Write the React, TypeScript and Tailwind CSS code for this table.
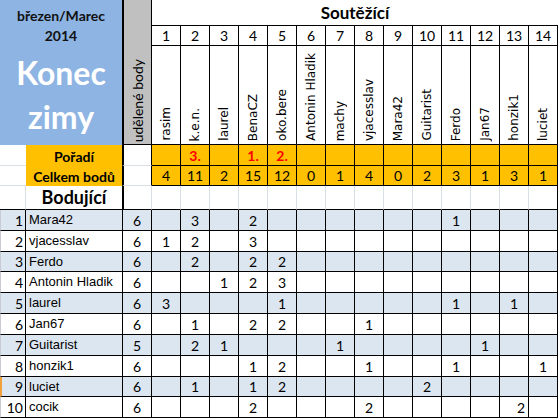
import React from 'react'

const players = ['rasim', 'k.e.n.', 'laurel', 'BenaCZ', 'oko.bere', 'Antonin Hladik', 'machy', 'vjacesslav', 'Mara42', 'Guitarist', 'Ferdo', 'Jan67', 'honzik1', 'luciet']
const totals = [4, 11, 2, 15, 12, 0, 1, 4, 0, 2, 3, 1, 3, 1]
const places: Record<number, string> = { 2: '3.', 4: '1.', 5: '2.' }

// body: which competitor (1-14) got how many points
const rows = [
  { name: 'Mara42', pts: 6, got: { 2: 3, 4: 2, 11: 1 } },
  { name: 'vjacesslav', pts: 6, got: { 1: 1, 2: 2, 4: 3 } },
  { name: 'Ferdo', pts: 6, got: { 2: 2, 4: 2, 5: 2 } },
  { name: 'Antonin Hladik', pts: 6, got: { 3: 1, 4: 2, 5: 3 } },
  { name: 'laurel', pts: 6, got: { 1: 3, 5: 1, 11: 1, 13: 1 } },
  { name: 'Jan67', pts: 6, got: { 2: 1, 4: 2, 5: 2, 8: 1 } },
  { name: 'Guitarist', pts: 5, got: { 2: 2, 3: 1, 7: 1, 12: 1 } },
  { name: 'honzik1', pts: 6, got: { 4: 1, 5: 2, 8: 1, 11: 1, 14: 1 } },
  { name: 'luciet', pts: 6, got: { 2: 1, 4: 1, 5: 2, 10: 2 } },
  { name: 'cocik', pts: 6, got: { 4: 2, 8: 2, 13: 2 } },
] as { name: string; pts: number; got: Record<number, number> }[]

const cols = Array.from({ length: 14 }, (_, i) => i + 1)

export default function App() {
  return (
    <div className="w-[560px] h-[420px] bg-white overflow-hidden text-black font-[family-name:Lato,sans-serif]">
      <div className="grid grid-cols-[26px_96px_30px_repeat(14,29px)] grid-rows-[26px_20px_99px_21px_20px_24px_21px_21px_20px_21px_21px_21px_21px_21px_20px_21px]">
        {/* title block */}
        <div className="col-span-2 row-span-3 bg-[#8db4e2] flex flex-col items-center text-[#111]">
          <div className="pt-[6px] text-[14px] font-bold leading-[20px]">březen/Marec</div>
          <div className="text-[14px] font-bold leading-[20px]">2014</div>
          <div className="mt-[5px] text-[32px] font-bold leading-[44px] text-white">Konec</div>
          <div className="text-[32px] font-bold leading-[44px] text-white">zimy</div>
        </div>
        <div className="row-span-3 bg-[#c0c0c0] border-l-2 border-r border-b border-black flex items-end justify-center pb-[2px]">
          <span className="[writing-mode:vertical-rl] rotate-180 text-[14px] leading-[16px]">udělené body</span>
        </div>
        <div className="col-span-14 border-b border-black flex items-center justify-center text-[17px] font-bold">Soutěžící</div>

        {cols.map((c) => (
          <div key={'n' + c} className="border-r border-b border-black flex items-center justify-center text-[14px]">
            {c}
          </div>
        ))}
        {players.map((p) => (
          <div key={p} className="border-r border-b border-black flex items-end justify-center pb-[3px]">
            <span className="[writing-mode:vertical-rl] rotate-180 text-[12px] leading-[14px] font-[family-name:'DejaVu_Sans',sans-serif]">{p}</span>
          </div>
        ))}

        {/* Pořadí */}
        <div className="border-b border-[#dadfe6]" />
        <div className="bg-[#ffc000] flex items-center justify-center text-[14px] font-bold pt-[1px]">Pořadí</div>
        <div className="border-l-2 border-r border-b border-black border-b-[#dadfe6]" />
        {cols.map((c) => (
          <div key={'p' + c} className="bg-[#ffc000] border-r border-b border-black flex items-center justify-center text-[14px] font-bold text-[#ff0000]">
            {places[c] ?? ''}
          </div>
        ))}

        {/* Celkem bodů */}
        <div className="border-b border-[#dadfe6]" />
        <div className="bg-[#ffc000] flex items-center justify-center text-[14px] font-bold">Celkem bodů</div>
        <div className="border-l-2 border-r border-b border-black border-b-[#dadfe6]" />
        {totals.map((t, i) => (
          <div key={'t' + i} className="bg-[#ffc000] border-r border-b border-black flex items-center justify-center text-[14px]">
            {t}
          </div>
        ))}

        {/* Bodující */}
        <div className="border-r border-b border-[#dadfe6] border-b-black" />
        <div className="border-b border-black flex items-center justify-center text-[18px] font-bold">Bodující</div>
        <div className="border-l-2 border-r border-b border-black border-r-[#dadfe6]" />
        {cols.map((c) => (
          <div key={'b' + c} className={c === 14 ? 'border-r border-b border-black' : 'border-r border-b border-[#dadfe6] border-b-black'} />
        ))}

        {rows.map((r, i) => {
          const bg = i % 2 === 0 ? 'bg-[#dce6f1]' : 'bg-white'
          return (
            <React.Fragment key={r.name}>
              <div className={`${bg} border-r border-b border-black flex items-center justify-end pr-[2px] text-[14px] ${i === 8 ? 'border-l-2 border-l-[#f2a23c]' : 'border-l border-l-[#c9cdd3]'}`}>
                {i + 1}
              </div>
              <div className={`${bg} border-b border-black flex items-center pl-[3px] text-[13px] font-[family-name:'Liberation_Sans',Arial,sans-serif]`}>
                {r.name}
              </div>
              <div className={`${bg} border-l border-r border-b border-black flex items-center justify-center text-[14px]`}>{r.pts}</div>
              {cols.map((c) => (
                <div
                  key={c}
                  className={`${bg} border-r border-b border-black flex items-center text-[14px] ${i === 9 && c === 13 ? 'justify-end pr-[3px]' : 'justify-center'}`}
                >
                  {r.got[c] ?? ''}
                </div>
              ))}
            </React.Fragment>
          )
        })}
      </div>
    </div>
  )
}
